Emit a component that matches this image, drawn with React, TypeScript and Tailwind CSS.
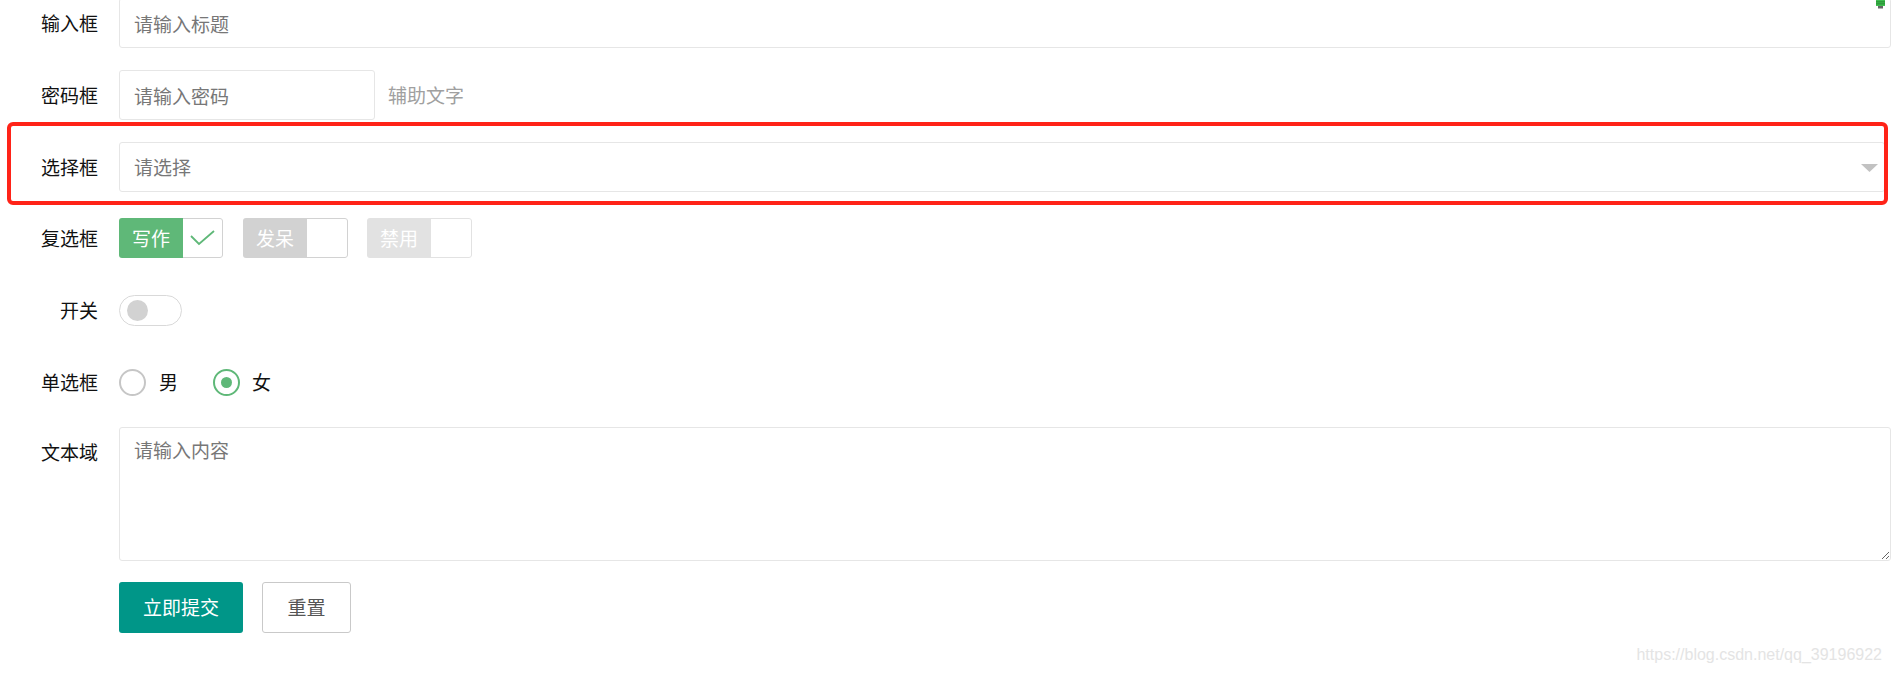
import React from "react";

const font = { fontFamily: '"Noto Sans CJK SC", "Noto Sans", sans-serif' };

function Label({ children, top = false }: { children: React.ReactNode; top?: boolean }) {
  return (
    <div
      className={`w-[98px] mr-[21px] shrink-0 text-right text-[19px] leading-[26px] text-[#111] ${top ? "pt-[12px] self-start" : ""}`}
    >
      {children}
    </div>
  );
}

export default function App() {
  return (
    <div className="relative w-[1891px] h-[673px] overflow-hidden bg-white" style={font}>
      <div className="flex flex-col -mt-[2px]">
        {/* 输入框 */}
        <div className="flex items-center h-[50px]">
          <Label>输入框</Label>
          <input
            className="flex-1 h-[50px] border border-[#e6e6e6] rounded-[3px] pl-[14px] text-[19px] outline-none placeholder:text-[#777]"
            placeholder="请输入标题"
          />
        </div>

        {/* 密码框 */}
        <div className="flex items-center h-[50px] mt-[22px]">
          <Label>密码框</Label>
          <input
            className="w-[256px] h-[50px] border border-[#e6e6e6] rounded-[3px] pl-[14px] text-[19px] outline-none placeholder:text-[#777]"
            placeholder="请输入密码"
          />
          <span className="ml-[13px] text-[19px] text-[#a0a0a0]">辅助文字</span>
        </div>

        {/* 选择框 */}
        <div className="flex items-center h-[50px] mt-[22px] mr-[6px]">
          <Label>选择框</Label>
          <div className="relative flex-1 h-[50px] border border-[#e6e6e6] rounded-[3px] pl-[14px] flex items-center text-[19px] text-[#777]">
            请选择
            <svg className="absolute right-[6px] top-[21px]" width="17" height="8" viewBox="0 0 17 8">
              <path d="M0 0 L17 0 L8.5 8 Z" fill="#c2c2c2" />
            </svg>
          </div>
        </div>

        {/* 复选框 */}
        <div className="flex items-center h-[40px] mt-[26px]">
          <Label>复选框</Label>
          <div className="flex h-[40px] rounded-[3px] overflow-hidden">
            <span className="w-[64px] bg-[#5FB878] text-white text-[19px] flex items-center justify-center">写作</span>
            <span className="w-[40px] border border-l-0 border-[#d2d2d2] rounded-r-[3px] flex items-center justify-center">
              <svg width="26" height="16" viewBox="0 0 26 16">
                <path d="M1 6 L9 14 L24 1" fill="none" stroke="#5FB878" strokeWidth="1.8" />
              </svg>
            </span>
          </div>
          <div className="flex h-[40px] ml-[20px] rounded-[3px] overflow-hidden">
            <span className="w-[64px] bg-[#d2d2d2] text-white text-[19px] flex items-center justify-center">发呆</span>
            <span className="w-[41px] border border-l-0 border-[#d2d2d2] rounded-r-[3px]" />
          </div>
          <div className="flex h-[40px] ml-[19px] rounded-[3px] overflow-hidden">
            <span className="w-[64px] bg-[#e2e2e2] text-white text-[19px] flex items-center justify-center">禁用</span>
            <span className="w-[41px] border border-l-0 border-[#e2e2e2] rounded-r-[3px]" />
          </div>
        </div>

        {/* 开关 */}
        <div className="flex items-center h-[50px] mt-[27px]">
          <Label>开关</Label>
          <div className="w-[63px] h-[31px] border border-[#d9d9d9] rounded-full flex items-center pl-[7px]">
            <div className="w-[21px] h-[21px] rounded-full bg-[#d2d2d2]" />
          </div>
        </div>

        {/* 单选框 */}
        <div className="flex items-center h-[50px] mt-[22px]">
          <Label>单选框</Label>
          <div className="w-[27px] h-[27px] rounded-full border-[2.5px] border-[#c6c6c6]" />
          <span className="ml-[13px] text-[19px] text-[#111]">男</span>
          <div className="ml-[35px] w-[27px] h-[27px] rounded-full border-[2.5px] border-[#5FB878] flex items-center justify-center">
            <div className="w-[11px] h-[11px] rounded-full bg-[#5FB878]" />
          </div>
          <span className="ml-[12px] text-[19px] text-[#111]">女</span>
        </div>

        {/* 文本域 */}
        <div className="flex mt-[20px]">
          <Label top>文本域</Label>
          <textarea
            className="flex-1 h-[134px] border border-[#e6e6e6] rounded-[3px] pl-[14px] pt-[9px] text-[19px] leading-[26px] outline-none placeholder:text-[#777]"
            placeholder="请输入内容"
          />
        </div>

        {/* 按钮 */}
        <div className="flex mt-[21px] pl-[119px]">
          <button className="w-[124px] h-[51px] bg-[#009688] text-white text-[19px] rounded-[3px]">立即提交</button>
          <button className="ml-[19px] w-[89px] h-[51px] border border-[#c9c9c9] bg-white text-[#555] text-[19px] rounded-[3px]">重置</button>
        </div>
      </div>

      {/* 标注红框 */}
      <div className="absolute left-[7px] top-[122px] w-[1881px] h-[83px] border-[4px] border-[#ff2318] rounded-[6px] pointer-events-none" />

      {/* 右上角小图标 */}
      <svg className="absolute left-[1875px] top-0" width="11" height="9" viewBox="0 0 11 9">
        <rect x="1" y="0" width="9" height="6" fill="#3fbf4f" />
        <rect x="1" y="1.5" width="9" height="0.8" fill="#1e7a2a" />
        <rect x="1" y="3.5" width="9" height="0.8" fill="#1e7a2a" />
        <rect x="3" y="6" width="5" height="2.5" fill="#666" />
      </svg>

      {/* 水印 */}
      <div
        className="absolute right-[9px] top-[643px] text-[16px] text-[#e4e4e4]"
        style={{ fontFamily: '"Liberation Sans", Arial, sans-serif' }}
      >
        https://blog.csdn.net/qq_39196922
      </div>
    </div>
  );
}
